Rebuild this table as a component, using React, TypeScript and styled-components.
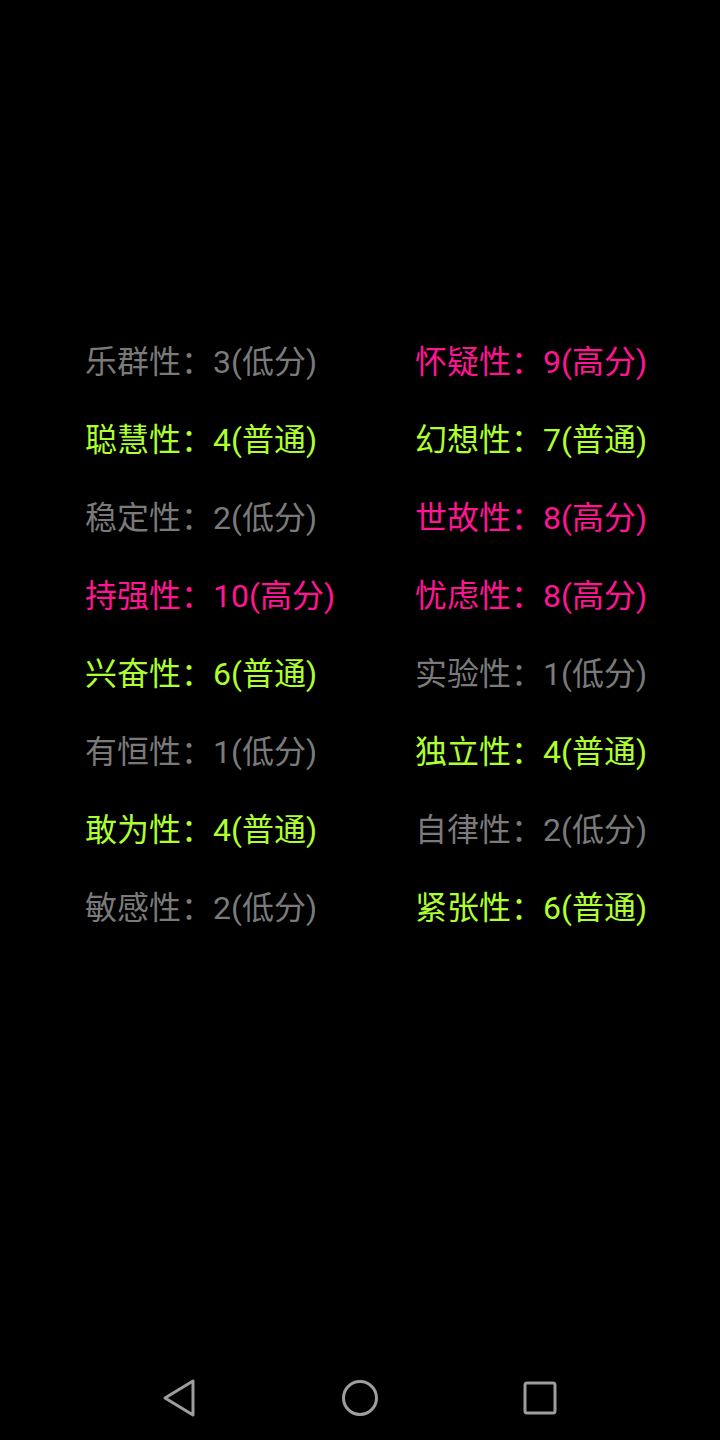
import React from "react";
import styled, { createGlobalStyle } from "styled-components";

const Global = createGlobalStyle`
  html, body { margin: 0; padding: 0; background: #000; }
  #root { width: 720px; height: 1440px; }
`;

const Screen = styled.div`
  width: 720px;
  height: 1440px;
  background: #000;
  display: flex;
  flex-direction: column;
  font-family: Roboto, "Noto Sans CJK SC", sans-serif;
`;

const Content = styled.div`
  flex: 1;
  padding-top: 323px;
  padding-left: 85px;
`;

const Grid = styled.div`
  display: grid;
  grid-template-columns: 330px 1fr;
  grid-auto-rows: 78px;
`;

type Level = "low" | "mid" | "high";

const colors: Record<Level, string> = {
  low: "#7a7a7a",
  mid: "#adff2f",
  high: "#ff1493",
};

const Item = styled.div<{ $level: Level }>`
  font-size: 32px;
  line-height: 78px;
  white-space: nowrap;
  color: ${(p) => colors[p.$level]};
`;

const NavBar = styled.div`
  height: 84px;
  display: flex;
  align-items: center;
  justify-content: center;
  padding-top: 2px;
`;

const NavSlot = styled.div`
  width: 180px;
  display: flex;
  justify-content: center;
  align-items: center;
`;

const items: [string, number, Level][] = [
  ["乐群性", 3, "low"],
  ["怀疑性", 9, "high"],
  ["聪慧性", 4, "mid"],
  ["幻想性", 7, "mid"],
  ["稳定性", 2, "low"],
  ["世故性", 8, "high"],
  ["持强性", 10, "high"],
  ["忧虑性", 8, "high"],
  ["兴奋性", 6, "mid"],
  ["实验性", 1, "low"],
  ["有恒性", 1, "low"],
  ["独立性", 4, "mid"],
  ["敢为性", 4, "mid"],
  ["自律性", 2, "low"],
  ["敏感性", 2, "low"],
  ["紧张性", 6, "mid"],
];

const label: Record<Level, string> = { low: "低分", mid: "普通", high: "高分" };

export default function App() {
  return (
    <>
      <Global />
      <Screen>
        <Content>
          <Grid>
            {items.map(([name, v, lvl]) => (
              <Item key={name} $level={lvl}>
                {name}：{v}({label[lvl]})
              </Item>
            ))}
          </Grid>
        </Content>
        <NavBar>
          <NavSlot>
            <svg width="36" height="40" viewBox="0 0 36 40">
              <path d="M31 3 L31 37 L3 20 Z" fill="none" stroke="#9e9e9e" strokeWidth="3" strokeLinejoin="round" />
            </svg>
          </NavSlot>
          <NavSlot>
            <svg width="40" height="40" viewBox="0 0 40 40">
              <circle cx="20" cy="20" r="16.5" fill="none" stroke="#9e9e9e" strokeWidth="3" />
            </svg>
          </NavSlot>
          <NavSlot>
            <svg width="40" height="40" viewBox="0 0 40 40">
              <rect x="5" y="5" width="30" height="30" rx="2" fill="none" stroke="#9e9e9e" strokeWidth="3" />
            </svg>
          </NavSlot>
        </NavBar>
      </Screen>
    </>
  );
}
